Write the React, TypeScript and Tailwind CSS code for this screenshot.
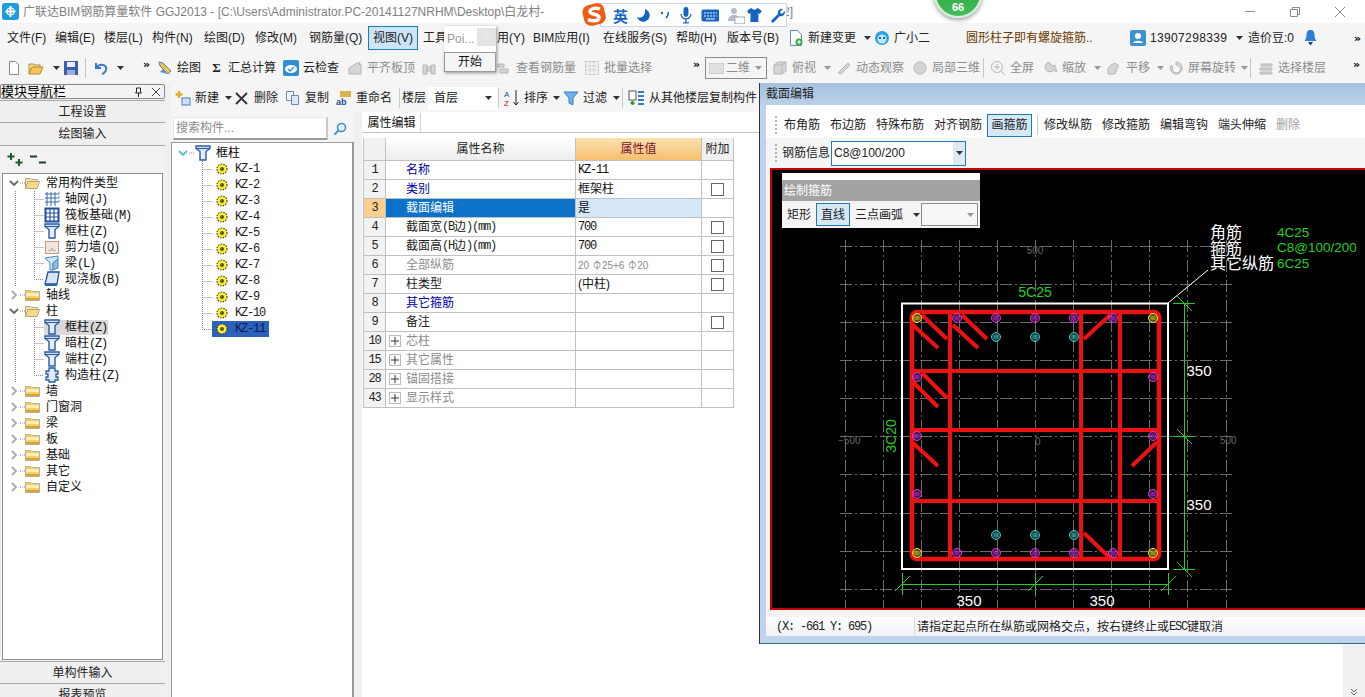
import React from "react";

const mono = "font-['Liberation_Mono','Noto_Sans_CJK_SC',monospace] text-[12px] tracking-[-1.2px]";

const Caret = ({ c = "#333" }: { c?: string }) => (
  <svg width="7" height="4" viewBox="0 0 7 4" className="shrink-0"><path d="M0 0h7L3.5 4z" fill={c} /></svg>
);
const More = () => (
  <span className="text-[11px] font-bold leading-none text-black -mt-2 font-['DejaVu_Sans',sans-serif]">»</span>
);
const Sep = ({ w }: { w: string }) => (
  <div className={`${w} shrink-0 flex h-full items-center`}><div className="h-[20px] w-px bg-[#c8c8c8]" /></div>
);

const I = ({ children, w = 16, h = 16 }: { children: React.ReactNode; w?: number; h?: number }) => (
  <svg width={w} height={h} viewBox={`0 0 ${w} ${h}`} className="shrink-0">{children}</svg>
);

const ColumnIcon = () => (
  <I>
    <path d="M1 1h14v2.500l-4 3V15H5V6.500L1 3.500z" fill="#e3edfb" stroke="#2a5aa8" strokeWidth="1.400" />
    <path d="M1.500 3.500h13" stroke="#2a5aa8" strokeWidth="1.200" />
  </I>
);
const GridIcon = () => (
  <I>
    <path d="M1 3h14M1 7h14M1 11h14M3 1v14M7 1v14M11 1v14" stroke="#3768b0" strokeWidth="1" />
    <path d="M14 2h2M14 6h2M14 10h2" stroke="#88a" strokeWidth="1" />
  </I>
);
const RaftIcon = () => (
  <I>
    <rect x="1.500" y="1.500" width="13" height="13" fill="#fff" stroke="#1f4f9e" strokeWidth="2" />
    <path d="M1 6h14M1 10h14M6 1v14M10 1v14" stroke="#1f4f9e" strokeWidth="1.200" />
  </I>
);
const WallIcon = () => (
  <I>
    <rect x="1.500" y="2.500" width="13" height="12" fill="#f3e6dc" stroke="#c79a86" />
    <path d="M4 12l1-1 2 1 1-3 2 3 2-1" stroke="#aaa" fill="none" />
  </I>
);
const BeamIcon = () => (
  <I>
    <path d="M1 3l13-2v3L9 8v7H6V8z" fill="#cfe4f6" stroke="#4a86c0" />
    <path d="M9 8l5-4v9l-5 2z" fill="#8dbde0" stroke="#4a86c0" />
  </I>
);
const SlabIcon = () => (
  <I>
    <path d="M4 1h11l-2 12H1z" fill="#d8e6f8" stroke="#1f4f9e" strokeWidth="1.300" />
    <path d="M1 13h12v2H1z" fill="#2d66b5" />
  </I>
);
const ConstrIcon = () => (
  <I>
    <path d="M5 1h6v3h3v3h-2v3h2v3h-3v2H5v-2H2v-3h2V7H2V4h3z" fill="#dfe9f7" stroke="#2a5aa8" strokeWidth="1.300" />
  </I>
);
const FolderClosed = () => (
  <I w={15} h={12}>
    <path d="M.5 2.500V1.500h5l1 1h8v9H.5z" fill="#f7cf6b" stroke="#b9b09a" />
    <rect x="1" y="4" width="13" height="3" fill="#fdeeb5" />
    <rect x="1" y="9" width="13" height="2" fill="#dd9f2f" />
  </I>
);
const FolderOpenI = () => (
  <I w={15} h={12}>
    <path d="M.5 11.500V1.500h5l1 1h6v2" fill="#f6e3ad" stroke="#b9a67a" />
    <path d="M.5 11.500l2.500-7h11.500l-2.500 7z" fill="#f8d98a" stroke="#b9a06a" />
  </I>
);
const Gear = () => (
  <svg width="12" height="12" viewBox="0 0 12 12" className="shrink-0">
    <circle cx="6" cy="6" r="5" fill="#ffee30" stroke="#333" strokeWidth="1.100" strokeDasharray="1.500 1.200" />
    <circle cx="6" cy="6" r="2" fill="#5c5a10" />
  </svg>
);
const Chevron = ({ open, c = "#999" }: { open?: boolean; c?: string }) => (
  <svg width="10" height="10" viewBox="0 0 10 10" className="shrink-0">
    <path d={open ? "M1 3l4 4 4-4" : "M3 1l4 4-4 4"} fill="none" stroke={c} strokeWidth="1.800" />
  </svg>
);

const Grey = ({ d }: { d: string }) => (
  <I><path d={d} fill="#d6d6d6" stroke="#b5b5b5" /></I>
);

const Tool = ({ w, icon, label, gray }: { w: string; icon?: React.ReactNode; label?: string; gray?: boolean }) => (
  <div className={`${w} shrink-0 flex items-center gap-1 whitespace-nowrap ${gray ? "text-[#8c8c8c]" : "text-[#222]"}`}>
    {icon}
    {label && <span>{label}</span>}
  </div>
);
const Box = ({ w, children }: { w: string; children?: React.ReactNode }) => (
  <div className={`${w} shrink-0 flex items-center whitespace-nowrap`}>{children}</div>
);

function TitleBar() {
  return (
    <div className="h-[23px] shrink-0 flex items-center bg-white pl-[2px] text-[12px] text-[#808080]">
      <svg width="17" height="17" viewBox="0 0 17 17" className="shrink-0">
        <rect width="17" height="17" rx="3" fill="#1f9be0" />
        <path d="M8.500 3v11M3.500 8.500h10" stroke="#fff" strokeWidth="2" />
        <circle cx="8.500" cy="8.500" r="3.500" fill="none" stroke="#fff" strokeWidth="1.200" />
      </svg>
      <span className="ml-[4px] whitespace-nowrap w-[555px] overflow-hidden">
        广联达BIM钢筋算量软件 GGJ2013 - [C:\Users\Administrator.PC-20141127NRHM\Desktop\白龙村-
      </span>
      <span className="ml-[205px] whitespace-nowrap">2]</span>
      <div className="ml-auto flex items-center pr-[20px] gap-[35px]">
        <div className="w-[10px] h-px bg-[#8a8a8a]" />
        <svg width="10" height="10" viewBox="0 0 10 10"><path d="M.5 2.500h7v7h-7zM2.500 2.500v-2h7v7h-2" fill="none" stroke="#8a8a8a" /></svg>
        <svg width="10" height="10" viewBox="0 0 10 10"><path d="M0 0l10 10M10 0L0 10" stroke="#8a8a8a" /></svg>
      </div>
    </div>
  );
}

function MenuBar() {
  return (
    <div className="h-[30px] shrink-0 flex items-center bg-[#f5f5f5] pl-[7px] text-[12px] text-[#222]">
      <Box w="w-[48px]">文件(F)</Box>
      <Box w="w-[49px]">编辑(E)</Box>
      <Box w="w-[48px]">楼层(L)</Box>
      <Box w="w-[52px]">构件(N)</Box>
      <Box w="w-[51px]">绘图(D)</Box>
      <Box w="w-[54px]">修改(M)</Box>
      <Box w="w-[59px]">钢筋量(Q)</Box>
      <div className="w-[50px] h-[24px] shrink-0 flex items-center justify-center bg-[#cce4f7] border border-[#1f7ab8] whitespace-nowrap">视图(V)</div>
      <div className="w-[5px] shrink-0" />
      <div className="w-[74px] shrink-0"><div className="w-[21px] overflow-hidden whitespace-nowrap">工具</div></div>
      <Box w="w-[36px]">用(Y)</Box>
      <Box w="w-[70px]">BIM应用(I)</Box>
      <Box w="w-[73px]">在线服务(S)</Box>
      <Box w="w-[51px]">帮助(H)</Box>
      <Box w="w-[61px]">版本号(B)</Box>
      <div className="w-[86px] shrink-0 flex items-center gap-[4px] whitespace-nowrap">
        <I>
          <path d="M2.500.5h7l4 4v11h-11z" fill="#fff" stroke="#5b8fc9" />
          <circle cx="11" cy="12" r="3.500" fill="#3fa83f" />
          <path d="M11 10v4M9 12h4" stroke="#fff" />
        </I>
        <span>新建变更</span>
        <span className="ml-[4px]"><Caret /></span>
      </div>
      <div className="w-[92px] shrink-0 flex items-center gap-[4px] whitespace-nowrap">
        <I>
          <circle cx="8" cy="8" r="7" fill="#2a9fe6" />
          <circle cx="8" cy="9" r="4.500" fill="#bfe8ff" />
          <circle cx="6" cy="8" r="1" fill="#134" />
          <circle cx="10" cy="8" r="1" fill="#134" />
        </I>
        <span>广小二</span>
      </div>
      <div className="w-[164px] shrink-0 whitespace-nowrap text-[#6b3800]">圆形柱子即有螺旋箍筋..</div>
      <div className="w-[118px] shrink-0 flex items-center gap-[4px] whitespace-nowrap">
        <svg width="16" height="16" viewBox="0 0 16 16" className="shrink-0">
          <rect width="16" height="16" rx="2" fill="#3b93cf" />
          <circle cx="8" cy="6" r="3" fill="#fff" />
          <path d="M3 13c1-3 9-3 10 0z" fill="#fff" />
        </svg>
        <span className="text-[#222] tracking-[0.35px]">13907298339</span>
        <span className="ml-[5px]"><Caret /></span>
      </div>
      <Box w="w-[56px]">造价豆:0</Box>
      <svg width="13" height="16" viewBox="0 0 13 16" className="shrink-0"><path d="M6.500 0c3 0 4 2 4 5 0 3 1 4 2 6H.5c1-2 2-3 2-6 0-3 1-5 4-5z" fill="#2f7fd6" /><path d="M4 12h5l-2.500 3.500z" fill="#143f7a" /></svg>
      <div className="ml-[37px]"><More /></div>
    </div>
  );
}

function MainToolbar() {
  return (
    <div className="h-[30px] shrink-0 flex items-center bg-[#f5f5f5] pl-[6px] text-[12px]">
      <Box w="w-[22px]"><I><path d="M3.500 1.500h6l3 3v10h-9z" fill="#fff" stroke="#8a8a8a" /></I></Box>
      <Box w="w-[25px]"><I><path d="M1 14V4h5l1 1h5v2" fill="#f5dc90" stroke="#b08a30" /><path d="M1 14l3-7h11l-3 7z" fill="#f4c552" stroke="#b08a30" /></I></Box>
      <Box w="w-[10px]"><Caret /></Box>
      <Box w="w-[22px]"><I><rect x="1" y="1" width="14" height="14" fill="#3a5fb0" /><rect x="4" y="2" width="8" height="5" fill="#e8eefb" /><rect x="4" y="10" width="8" height="5" fill="#9db0d8" /></I></Box>
      <Sep w="w-[8px]" />
      <Box w="w-[24px]"><I><path d="M3 3v5h5M3.500 8C5 4 11 3.500 13 7c1 3-1 6-4 7" fill="none" stroke="#3778cf" strokeWidth="2" /></I></Box>
      <Box w="w-[26px]"><Caret /></Box>
      <Box w="w-[14px]"><More /></Box>
      <Tool w="w-[54px]" label="绘图" icon={<I><path d="M2 2l4 1 8 8-3 3-8-8z" fill="#e8c650" stroke="#5b7fb5" /><path d="M3 12l3-3 4 5z" fill="#5b8fd0" /></I>} />
      <div className="w-[72px] shrink-0 flex items-center gap-[6px] whitespace-nowrap text-[#222]">
        <span className="w-[11px] text-[13px] font-bold text-center font-['Liberation_Serif',serif]">Σ</span>
        <span>汇总计算</span>
      </div>
      <Tool w="w-[64px]" label="云检查" icon={<I><rect width="16" height="16" rx="2" fill="#2f8fd4" /><ellipse cx="8" cy="9" rx="6" ry="4" fill="#fff" /><path d="M5 9l2 2 4-4" stroke="#2f8fd4" strokeWidth="1.300" fill="none" /></I>} />
      <Tool w="w-[74px]" gray label="平齐板顶" icon={<Grey d="M2 14V8l8-5 2 2v-3l2 3v9z" />} />
      <Tool w="w-[75px]" gray icon={<Grey d="M2 5h4v9H2zM10 5h4v9h-4zM6 7h4v4H6z" />} />
      <Tool w="w-[88px]" gray label="查看钢筋量" icon={<Grey d="M2 4h6v3H2zM4 9h8v4H4z" />} />
      <Tool w="w-[109px]" gray label="批量选择" icon={<I><path d="M1.500 1.500h13v13h-13zM1.500 6h13M1.500 10h13M6 1.500v13M10 1.500v13" fill="none" stroke="#c0c0c0" strokeDasharray="2 1" /></I>} />
      <Box w="w-[12px]"><More /></Box>
      <div className="w-[62px] h-[22px] shrink-0 flex items-center border border-[#8a8a8a] pl-[3px] pr-[4px] text-[#8c8c8c]">
        <div className="w-[15px] h-[11px] bg-[#e0e0e0] border border-[#cfcfcf]" />
        <span className="ml-[2px] whitespace-nowrap">二维</span>
        <span className="ml-auto"><Caret c="#999" /></span>
      </div>
      <div className="w-[5px] shrink-0" />
      <Tool w="w-[52px]" gray label="俯视" icon={<Grey d="M2 5l4-3h8v9l-4 3H2zM2 5h8v9M10 5l4-3" />} />
      <Box w="w-[12px]"><Caret c="#999" /></Box>
      <Tool w="w-[76px]" gray label="动态观察" icon={<Grey d="M2 13L12 3l2 2L5 14z" />} />
      <Tool w="w-[71px]" gray label="局部三维" icon={<Grey d="M8 2a6 6 0 100 12A6 6 0 008 2z" />} />
      <Sep w="w-[7px]" />
      <Tool w="w-[52px]" gray label="全屏" icon={<I><circle cx="7" cy="7" r="5.500" fill="#f4f4f4" stroke="#b5b5b5" /><path d="M7 4v6M4 7h6M11 11l4 4" stroke="#b5b5b5" /></I>} />
      <Tool w="w-[52px]" gray label="缩放" icon={<Grey d="M7 2a5 5 0 105 8l2 2 1-1-2-3V5l-3 1z" />} />
      <Box w="w-[12px]"><Caret c="#999" /></Box>
      <Tool w="w-[51px]" gray label="平移" icon={<Grey d="M2 14V8l3-3 4-2 3 2v2l-2 4-1 3z" />} />
      <Box w="w-[11px]"><Caret c="#999" /></Box>
      <Tool w="w-[73px]" gray label="屏幕旋转" icon={<Grey d="M8 2a6 6 0 11-5 3l2 2a4 4 0 103-2z" />} />
      <Box w="w-[9px]"><Caret c="#999" /></Box>
      <Sep w="w-[8px]" />
      <Tool w="w-[95px]" gray label="选择楼层" icon={<Grey d="M3 4h11v2H3zM2 8h12v2H2zM2 12h12v2H2z" />} />
      <More />
    </div>
  );
}

type Row = { kind: "folder" | "child"; open?: boolean; cn: string; lat?: string; icon?: React.ReactNode; sel?: boolean; last?: boolean; outer?: boolean };

const navRows: Row[] = [
  { kind: "folder", open: true, cn: "常用构件类型" },
  { kind: "child", cn: "轴网", lat: "(J)", icon: <GridIcon />, outer: true },
  { kind: "child", cn: "筏板基础", lat: "(M)", icon: <RaftIcon />, outer: true },
  { kind: "child", cn: "框柱", lat: "(Z)", icon: <ColumnIcon />, outer: true },
  { kind: "child", cn: "剪力墙", lat: "(Q)", icon: <WallIcon />, outer: true },
  { kind: "child", cn: "梁", lat: "(L)", icon: <BeamIcon />, outer: true },
  { kind: "child", cn: "现浇板", lat: "(B)", icon: <SlabIcon />, outer: true, last: true },
  { kind: "folder", cn: "轴线" },
  { kind: "folder", open: true, cn: "柱" },
  { kind: "child", cn: "框柱", lat: "(Z)", icon: <ColumnIcon />, sel: true, outer: true },
  { kind: "child", cn: "暗柱", lat: "(Z)", icon: <ColumnIcon />, outer: true },
  { kind: "child", cn: "端柱", lat: "(Z)", icon: <ColumnIcon />, outer: true },
  { kind: "child", cn: "构造柱", lat: "(Z)", icon: <ConstrIcon />, outer: true, last: true },
  { kind: "folder", cn: "墙" },
  { kind: "folder", cn: "门窗洞" },
  { kind: "folder", cn: "梁" },
  { kind: "folder", cn: "板" },
  { kind: "folder", cn: "基础" },
  { kind: "folder", cn: "其它" },
  { kind: "folder", cn: "自定义" },
];

const FolderWrap = ({ open }: { open?: boolean }) => (open ? <FolderOpenI /> : <FolderClosed />);

function NavRow({ r }: { r: Row }) {
  if (r.kind === "folder") {
    return (
      <div className="h-[16px] flex items-center pl-[6px]">
        <Chevron open={r.open} c={r.open ? "#666" : "#aaa"} />
        <svg width="6" height="2" className="shrink-0"><path d="M1 1h5" stroke="#888" strokeDasharray="1 1" /></svg>
        <FolderWrap open={r.open} />
        <span className="ml-[6px] whitespace-nowrap">{r.cn}</span>
      </div>
    );
  }
  return (
    <div className="h-[16px] flex items-center">
      <svg width="41" height="16" className="shrink-0">
        <path d="M12.500 0v16" stroke="#888" strokeDasharray="1 1" />
        <path d={r.last ? "M31.500 0v8.500H41" : "M31.500 0v16M31.500 8.500H41"} stroke="#888" strokeDasharray="1 1" fill="none" />
      </svg>
      <div className={`flex h-[15px] items-center pr-[1px] ${r.sel ? "bg-[#d9d9d9]" : ""}`}>
        {r.icon}
        <span className="ml-[5px] whitespace-nowrap">{r.cn}<span className={mono}>{r.lat}</span></span>
      </div>
    </div>
  );
}

function NavPanel() {
  const btn = "shrink-0 flex items-center justify-center bg-[#efefef] border-b border-[#a8a8a8] text-[#222]";
  return (
    <div className="w-[165px] shrink-0 h-full flex flex-col text-[12px] bg-[#f0f0f0]">
      <div className="mt-px h-[15px] shrink-0 flex items-center border border-[#8a8a8a] rounded-[2px] bg-[#f3f3f3] text-black text-[13px] leading-none">
        <span className="whitespace-nowrap">模块导航栏</span>
        <svg width="9" height="10" viewBox="0 0 9 10" className="ml-[68px]"><path d="M2.500 1h4v4l1 1h-6l1-1zM4.500 6v4" fill="none" stroke="#222" /></svg>
        <svg width="8" height="8" viewBox="0 0 8 8" className="ml-[9px]"><path d="M0 0l8 8M8 0L0 8" stroke="#444" /></svg>
      </div>
      <div className={`${btn} mt-[1px] h-[23px] border-t`}>工程设置</div>
      <div className={`${btn} h-[23px]`}>绘图输入</div>
      <div className="h-[27px] shrink-0 flex items-center pl-[7px] gap-[6px] bg-[#f2f2f2]">
        <svg width="17" height="15" viewBox="0 0 17 15"><path d="M4 1v7M.5 4.500h7M12 7v7M8.500 10.500h7" stroke="#1f5a2c" strokeWidth="2" /></svg>
        <svg width="17" height="15" viewBox="0 0 17 15"><path d="M0 4.500h7M9 10.500h7" stroke="#1f3a3a" strokeWidth="2" /></svg>
      </div>
      <div className="mx-[2px] h-[487px] shrink-0 border border-[#8f8f8f] bg-white pt-[1px] text-[#111] overflow-hidden">
        {navRows.map((r, i) => <NavRow key={i} r={r} />)}
      </div>
      <div className={`${btn} mt-px h-[23px] border-t`}>单构件输入</div>
      <div className={`${btn} h-[23px]`}>报表预览</div>
    </div>
  );
}

function ComponentToolbar() {
  const tool = "shrink-0 flex items-center gap-[4px] whitespace-nowrap";
  return (
    <div className="mt-px h-[28px] shrink-0 flex items-center bg-[#f5f5f5] pl-[3px] text-[12px] text-[#222]">
      <div className={`${tool} w-[61px]`}>
        <I w={17}><path d="M5 1v7M1.500 4.500h7" stroke="#e0b020" strokeWidth="2.400" /><rect x="8" y="8" width="8" height="7" fill="#cfe0f5" stroke="#4a7fc0" /></I>
        <span>新建</span>
        <span className="ml-[2px]"><Caret /></span>
      </div>
      <div className={`${tool} w-[50px] gap-[6px]`}>
        <svg width="13" height="13" viewBox="0 0 13 13" className="shrink-0"><path d="M1 1l11 11M12 1L1 12" stroke="#333" strokeWidth="1.800" /></svg>
        <span>删除</span>
      </div>
      <div className={`${tool} w-[51px]`}>
        <I><path d="M1.500 1.500h7v9h-7z" fill="#f6f6f6" stroke="#6a8ab5" /><path d="M6.500 5.500h7v9h-7z" fill="#dbe7f6" stroke="#6a8ab5" /></I>
        <span>复制</span>
      </div>
      <div className={`${tool} w-[63px]`}>
        <I><path d="M4 1l11 0v6L4 7z" fill="#d6b84a" /><text x="0" y="15" fontSize="9" fontWeight="700" fill="#1d4f91" className="font-['Liberation_Sans']">ab</text></I>
        <span>重命名</span>
      </div>
      <Sep w="w-[3px]" />
      <div className="w-[26px] shrink-0 whitespace-nowrap">楼层</div>
      <div className="w-[70px] h-[23px] shrink-0 flex items-center bg-white pl-[6px] pr-[6px] whitespace-nowrap">
        <span>首层</span><span className="ml-auto"><Caret /></span>
      </div>
      <Sep w="w-[6px]" />
      <div className={`${tool} w-[60px]`}>
        <svg width="16" height="18" viewBox="0 0 16 18" className="shrink-0">
          <text x="0" y="8" fontSize="8" fill="#1d4f91" className="font-['Liberation_Sans']">A</text>
          <text x="0" y="17" fontSize="8" fill="#b02222" className="font-['Liberation_Sans']">Z</text>
          <path d="M12 1v15M9.500 13l2.500 3 2.500-3" fill="none" stroke="#222" />
        </svg>
        <span>排序</span>
        <span className="ml-[1px]"><Caret /></span>
      </div>
      <div className={`${tool} w-[58px] gap-[5px]`}>
        <svg width="14" height="14" viewBox="0 0 14 14" className="shrink-0"><path d="M0 1h14L9 7v7l-4-2V7z" fill="#6fb0e8" stroke="#2f7fc9" /></svg>
        <span>过滤</span>
        <span className="ml-[1px]"><Caret /></span>
      </div>
      <Sep w="w-[6px]" />
      <div className={`${tool} gap-[3px]`}>
        <I w={17}><rect x="1" y="1" width="7" height="9" fill="#fff" stroke="#555" /><path d="M4.500 11v4M2.500 13h4" stroke="#2a9a3a" strokeWidth="2" /><path d="M10 2h6M10 6h6M10 10h6M10 14h6" stroke="#3a7ab8" strokeWidth="2" /></I>
        <span>从其他楼层复制构件</span>
      </div>
    </div>
  );
}

function ListPanel() {
  return (
    <div className="w-[183px] shrink-0 flex flex-col text-[12px]">
      <div className="h-[30px] shrink-0 flex items-end bg-[#f5f5f5] pb-[2px] pl-[2px]">
        <div className="w-[155px] h-[23px] bg-white border-t border-l border-[#e8e8e8] border-b-2 border-r-2 border-b-[#9a9a9a] border-r-[#c8c8c8] flex items-center pl-[2px] text-[#8a8a8a]">搜索构件...</div>
        <div className="w-[24px] h-[23px] flex items-center justify-center">
          <svg width="14" height="14" viewBox="0 0 14 14"><circle cx="8.500" cy="5.500" r="4" fill="#eaf4fc" stroke="#3f93c9" strokeWidth="1.600" /><path d="M5.500 8.500L1.500 12.500" stroke="#3f93c9" strokeWidth="2" /></svg>
        </div>
      </div>
      <div className="flex-1 border-t border-l border-r-2 border-[#9a9a9a] bg-white pt-[2px]">
        <div className="h-[16px] flex items-center pl-[6px]">
          <Chevron open c="#4fc3d0" />
          <svg width="7" height="2" className="shrink-0"><path d="M1 1h6" stroke="#888" strokeDasharray="1 1" /></svg>
          <ColumnIcon />
          <span className="ml-[5px]">框柱</span>
        </div>
        {Array.from({ length: 11 }).map((_, i) => (
          <div key={i} className="h-[16px] flex items-center">
            <svg width="40" height="16" className="shrink-0">
              <path d={i === 10 ? "M30.500 0v8.500H40" : "M30.500 0v16M30.500 8.500H40"} stroke="#888" strokeDasharray="1 1" fill="none" />
            </svg>
            <div className={`flex items-center h-[16px] w-[57px] pl-[4px] ${i === 10 ? "bg-[#2b62bb] text-[#0a1c50]" : "text-[#222]"}`}>
              <Gear />
              <span className={`ml-[7px] ${mono}`}>KZ-{i + 1}</span>
            </div>
          </div>
        ))}
      </div>
    </div>
  );
}

const Chk = () => <div className="w-[13px] h-[13px] border border-[#666] bg-white" />;

type PRow = { n: string; name: React.ReactNode; c?: string; val?: React.ReactNode; chk?: boolean; plus?: boolean; sel?: boolean };
const pRows: PRow[] = [
  { n: "1", name: "名称", c: "text-[#0000a8]", val: <span className={mono}>KZ-11</span> },
  { n: "2", name: "类别", c: "text-[#0000a8]", val: "框架柱", chk: true },
  { n: "3", name: "截面编辑", c: "text-white", val: "是", sel: true },
  { n: "4", name: <>截面宽<span className={mono}>(B</span>边<span className={mono}>)(mm)</span></>, c: "text-[#222]", val: <span className={mono}>700</span>, chk: true },
  { n: "5", name: <>截面高<span className={mono}>(H</span>边<span className={mono}>)(mm)</span></>, c: "text-[#222]", val: <span className={mono}>700</span>, chk: true },
  { n: "6", name: "全部纵筋", c: "text-[#8c8c8c]", val: <span className="text-[#8c8c8c] text-[10px] font-['Liberation_Sans','Noto_Sans_CJK_SC',sans-serif]">20 <b className="text-[#333]">⏀</b>25+6 <b className="text-[#333]">⏀</b>20</span>, chk: true },
  { n: "7", name: "柱类型", c: "text-[#222]", val: "(中柱)", chk: true },
  { n: "8", name: "其它箍筋", c: "text-[#0000a8]" },
  { n: "9", name: "备注", c: "text-[#222]", chk: true },
  { n: "10", name: "芯柱", c: "text-[#8c8c8c]", plus: true },
  { n: "15", name: "其它属性", c: "text-[#8c8c8c]", plus: true },
  { n: "28", name: "锚固搭接", c: "text-[#8c8c8c]", plus: true },
  { n: "43", name: "显示样式", c: "text-[#8c8c8c]", plus: true },
];

function PropPanel() {
  const line = "border-b border-r border-[#c0c0c0]";
  return (
    <div className="relative flex-1 bg-white text-[12px] min-w-0">
      <div className="h-[20px] mt-px flex items-stretch border-b border-[#c4c4c4]">
        <div className="ml-[1px] w-[58px] flex items-center justify-center bg-white border-r border-[#d0d0d0] text-[#111]">属性编辑</div>
      </div>
      <div className="ml-[1px] mt-[5px] w-[370px] grid grid-cols-[22px_190px_126px_32px] grid-rows-[23px] auto-rows-[19px] border-l border-[#c0c0c0]">
        <div className={`${line} bg-[#f1f1f1]`} />
        <div className={`${line} flex items-center justify-center bg-gradient-to-b from-white to-[#ececec] text-[#222]`}>属性名称</div>
        <div className={`${line} flex items-center justify-center bg-gradient-to-b from-[#fbe2ae] to-[#f5bf6e] text-[#7a1230]`}>属性值</div>
        <div className={`${line} flex items-center justify-center bg-[#f1f1f1] text-[#222]`}>附加</div>
        {pRows.map((r) => (
          <React.Fragment key={r.n}>
            <div className={`${line} flex items-center justify-center ${mono} ${r.sel ? "bg-[#fbcf8e]" : "bg-[#f3f3f3]"} text-[#222]`}>{r.n}</div>
            <div className={`${line} flex items-center pl-[20px] relative whitespace-nowrap ${r.sel ? "bg-[#0a72c8]" : ""} ${r.c}`}>
              {r.plus && (
                <div className="absolute left-[3px] top-[3px] w-[12px] h-[12px] border border-[#bbb] flex items-center justify-center">
                  <svg width="8" height="8" viewBox="0 0 8 8"><path d="M4 0v8M0 4h8" stroke="#333" /></svg>
                </div>
              )}
              {r.name}
            </div>
            <div className={`${line} flex items-center pl-[2px] whitespace-nowrap text-[#111] ${r.sel ? "bg-[#d5e7f7]" : ""}`}>{r.val}</div>
            <div className={`${line} flex items-center justify-center`}>{r.chk && <Chk />}</div>
          </React.Fragment>
        ))}
      </div>
      <div className="absolute right-0 bottom-0 w-[22px] h-[54px] bg-[#f0f0f0] flex items-end justify-center pb-[2px]">
        <svg width="8" height="8" viewBox="0 0 8 8"><path d="M1 2l3 3 3-3M1 5l3 3 3-3" fill="none" stroke="#666" /></svg>
      </div>
    </div>
  );
}

function Canvas() {
  const vs = [845, 883, 921, 959, 997, 1035, 1073, 1111, 1149, 1187, 1226];
  const hs = [246, 284, 322, 360, 398, 436, 474, 513, 551, 589];
  const hooks = [
    [922, 315, 947, 339], [913, 325, 938, 348], [962, 315, 987, 339], [953, 325, 978, 348],
    [922, 373, 947, 398], [913, 382, 938, 407], [913, 443, 938, 466], [1157, 442, 1132, 466],
    [1110, 315, 1084, 339], [1084, 533, 1110, 558],
  ];
  const purple = [
    ...[957, 996, 1035, 1074, 1113].flatMap((x) => [[x, 318], [x, 553]]),
    ...[377, 436, 494].flatMap((y) => [[917, y], [1153, y]]),
  ];
  const cyan = [996, 1035, 1074].flatMap((x) => [[x, 337], [x, 535]]);
  const yellow = [[917, 318], [1153, 318], [917, 553], [1153, 553]];
  const dot = (p: number[], c: string, i: number) => (
    <g key={`${c}${i}`}>
      <circle cx={p[0]} cy={p[1]} r="4.500" fill={c} fillOpacity="0.35" stroke={c} />
      <path d={`M${p[0] - 2.500} ${p[1] - 1}h5M${p[0] - 2.500} ${p[1] + 1}h5`} stroke={c} strokeWidth="0.800" />
    </g>
  );
  const sans = "font-['Liberation_Sans',sans-serif]";
  const cad = "font-['Noto_Sans_CJK_SC',sans-serif]";
  return (
    <svg width="593" height="438" viewBox="772 170 593 438" className="block bg-black">
      {vs.map((x) => <path key={x} d={`M${x + 0.5} 240V608`} stroke="#6b6b6b" strokeDasharray="12 3 2 3" />)}
      {hs.map((y) => <path key={y} d={`M840 ${y + 0.5}H1232`} stroke="#6b6b6b" strokeDasharray="12 3 2 3" />)}
      <text x="1035" y="254" textAnchor="middle" fontSize="10" fill="#666" className={sans}>500</text>
      <text x="838" y="444" fontSize="10" fill="#666" className={sans}>−500</text>
      <text x="1220" y="444" fontSize="10" fill="#666" className={sans}>500</text>
      <text x="1035" y="445" fontSize="10" fill="#666" className={sans}>0</text>

      <rect x="902" y="303.500" width="266" height="265.500" fill="none" stroke="#fff" strokeWidth="2" />
      <path d="M1168 303l40-33" stroke="#fff" />

      <g stroke="#22d022" strokeWidth="1" fill="none">
        <path d="M1184.500 303v266M1173 303.500h22M1173 436.500h22M1173 569.500h22M1177 296l15 15M1177 429l15 15M1177 562l15 15" />
        <path d="M902 584.500h266M902.500 573v22M1035.500 573v22M1168.500 573v22M895 591l15-15M1028 591l15-15M1161 591l15-15" />
      </g>

      <g stroke="#ee1111" fill="none" strokeWidth="4">
        <rect x="912" y="312" width="247" height="247" rx="5" strokeWidth="4.500" />
        <path d="M950 313v245M1081 313v245M1120 313v245M913 371h245M913 430h245M913 501h245" />
        {hooks.map((h, i) => <path key={i} d={`M${h[0]} ${h[1]}L${h[2]} ${h[3]}`} />)}
      </g>
      {purple.map((p, i) => dot(p, "#d03ad8", i))}
      {cyan.map((p, i) => dot(p, "#3ec8c8", i))}
      {yellow.map((p, i) => dot(p, "#f2e23a", i))}

      <text x="1210" y="238" fontSize="16" fill="#fff" className={cad}>角筋</text>
      <text x="1210" y="254" fontSize="16" fill="#fff" className={cad}>箍筋</text>
      <text x="1210" y="269" fontSize="16" fill="#fff" className={cad}>其它纵筋</text>
      <text x="1277" y="237" fontSize="13.500" fill="#22d022" className={sans}>4C25</text>
      <text x="1277" y="252" fontSize="13.500" fill="#22d022" className={sans}>C8@100/200</text>
      <text x="1277" y="268" fontSize="13.500" fill="#22d022" className={sans}>6C25</text>
      <text x="1035" y="297" textAnchor="middle" fontSize="14" fill="#22d022" className={sans}>5C25</text>
      <text x="0" y="0" transform="translate(896 436) rotate(-90)" textAnchor="middle" fontSize="14" fill="#22d022" className={sans}>3C20</text>
      <text x="1199" y="376" textAnchor="middle" fontSize="15" fill="#fff" className={sans}>350</text>
      <text x="1199" y="510" textAnchor="middle" fontSize="15" fill="#fff" className={sans}>350</text>
      <text x="969" y="606" textAnchor="middle" fontSize="15" fill="#fff" className={sans}>350</text>
      <text x="1102" y="606" textAnchor="middle" fontSize="15" fill="#fff" className={sans}>350</text>
    </svg>
  );
}

const Grip = () => (
  <svg width="2" height="18" className="shrink-0"><path d="M1 0v18" stroke="#999" strokeDasharray="2 2" strokeWidth="1.500" /></svg>
);

function SectionDialog() {
  const items = "shrink-0 whitespace-nowrap";
  return (
    <div className="absolute left-[759px] top-[83px] w-[606px] h-[561px] flex flex-col border-l border-[#333] border-b border-b-[#2f6f85] bg-[#bfd4ea] text-[12px] text-[#222]">
      <div className="h-[22px] shrink-0 flex items-center pl-[6px] bg-gradient-to-b from-[#a6c1df] to-[#bbd1e8]">截面编辑</div>
      <div className="ml-[6px] flex-1 flex flex-col bg-[#f5f5f5] min-h-0">
        <div className="h-[33px] shrink-0 flex items-center pt-[7px] pl-[9px] bg-white">
          <Grip />
          <Box w="w-[7px]" />
          <Box w="w-[46px]">布角筋</Box>
          <Box w="w-[46px]">布边筋</Box>
          <Box w="w-[58px]">特殊布筋</Box>
          <Box w="w-[53px]">对齐钢筋</Box>
          <div className={`${items} w-[45px] h-[23px] flex items-center justify-center bg-[#d5e8f8] border border-[#1f7ab8]`}>画箍筋</div>
          <div className="w-[5px] shrink-0" />
          <div className="h-[20px] w-px bg-[#c8c8c8] shrink-0" />
          <Box w="w-[6px]" />
          <Box w="w-[58px]">修改纵筋</Box>
          <Box w="w-[58px]">修改箍筋</Box>
          <Box w="w-[58px]">编辑弯钩</Box>
          <Box w="w-[58px]">端头伸缩</Box>
          <div className={`${items} text-[#a0a0a0]`}>删除</div>
        </div>
        <div className="h-[30px] shrink-0 flex items-center pl-[9px]">
          <Grip />
          <div className={`${items} ml-[5px] w-[49px]`}>钢筋信息</div>
          <div className="w-[135px] h-[25px] shrink-0 flex items-center justify-between border border-[#1f7ab8] bg-white pl-[2px]">
            <span className="font-['Liberation_Sans',sans-serif]">C8@100/200</span>
            <div className="w-[12px] h-full flex items-center justify-center bg-[#dfe9f3]"><Caret /></div>
          </div>
        </div>
        <div className="relative ml-[4px] h-[442px] shrink-0 border-2 border-r-0 border-[#c40000] bg-black">
          <Canvas />
          <div className="absolute left-[10px] top-[3px] w-[198px] h-[55px] flex flex-col bg-white">
            <div className="h-[7px] shrink-0" />
            <div className="h-[21px] shrink-0 flex items-center pl-[2px] bg-[#a3a3a3] text-white">绘制箍筋</div>
            <div className="flex-1 flex items-center bg-[#f5f5f5] pl-[5px]">
              <Box w="w-[29px]">矩形</Box>
              <div className="w-[34px] h-[23px] shrink-0 flex items-center justify-center bg-[#d5e8f8] border border-[#1f7ab8]">直线</div>
              <Box w="w-[5px]" />
              <Box w="w-[58px]">三点画弧</Box>
              <Box w="w-[8px]"><Caret /></Box>
              <div className="w-[57px] h-[23px] shrink-0 flex items-center justify-end border border-[#8a8a8a] bg-[#f7f7f7] pr-[3px]"><Caret c="#999" /></div>
            </div>
          </div>
        </div>
        <div className="h-[7px] shrink-0 bg-[#f4f4f4]" />
        <div className="h-[19px] shrink-0 flex items-stretch bg-gradient-to-b from-white to-[#eef2f6]">
          <div className={`w-[146px] ml-[3px] flex items-center pl-[7px] border-r border-[#d8d8d8] ${mono}`}>(X: -661 Y: 695)</div>
          <div className="flex items-center pl-[2px] whitespace-nowrap">请指定起点所在纵筋或网格交点，按右键终止或<span className={mono}>ESC</span>键取消</div>
        </div>
        <div className="h-[7px] shrink-0 bg-[#bfd4ea] -ml-[6px]" />
      </div>
    </div>
  );
}

function Overlays() {
  return (
    <>
      <div className="absolute left-[934px] -top-[30px] w-[48px] h-[48px] rounded-full bg-gradient-to-b from-[#1f9d3d] to-[#43bd5a] border-2 border-[#d6efd9] shadow-[0_2px_5px_rgba(0,0,0,0.4)] flex items-end justify-center pb-[3px]">
        <span className="text-[11px] font-bold text-white leading-none font-['Liberation_Sans',sans-serif]">66</span>
      </div>

      <div className="absolute left-[600px] top-[3px] w-[187px] h-[24px] bg-white border border-[#c8d8ea] flex items-center pl-[12px] gap-[9px]">
        <span className="text-[15px] font-bold text-[#1565c0] leading-none font-['Noto_Sans_CJK_SC',sans-serif]">英</span>
        <svg width="13" height="13" viewBox="0 0 13 13"><path d="M8 0a6.500 6.500 0 11-8 8c3 2 9 0 8-8z" fill="#1565c0" /></svg>
        <svg width="10" height="10" viewBox="0 0 10 10" className="ml-[1px]"><circle cx="2" cy="3" r="1.200" fill="#1565c0" /><path d="M8 2c1 2 0 4-2 6" stroke="#1565c0" strokeWidth="1.600" fill="none" /></svg>
        <svg width="12" height="17" viewBox="0 0 12 17" className="ml-[1px]"><rect x="3.500" width="5" height="10" rx="2.500" fill="#1565c0" /><path d="M1 7a5 5 0 0010 0M6 12v4M3 16h6" stroke="#1565c0" strokeWidth="1.300" fill="none" /></svg>
        <svg width="19" height="13" viewBox="0 0 19 13"><rect x=".5" y=".5" width="18" height="12" rx="2" fill="#1565c0" /><path d="M3 4h13M3 7h13" stroke="#fff" strokeDasharray="2 1" /><path d="M5 10h9" stroke="#fff" /></svg>
        <svg width="17" height="17" viewBox="0 0 17 17"><circle cx="6" cy="4" r="3" fill="#b5bcc4" /><path d="M0 14c0-8 12-8 12 0z" fill="#b5bcc4" /><rect x="7" y="10" width="10" height="7" fill="#fff" stroke="#9aa" /></svg>
        <svg width="15" height="14" viewBox="0 0 15 14" className="-ml-[7px]"><path d="M4 0l3.500 2L11 0l4 3-2 3-1.500-1v9h-8V5L2 6 0 3z" fill="#1565c0" /></svg>
        <svg width="15" height="15" viewBox="0 0 15 15"><path d="M14 3l-3 3-2-2 3-3a4 4 0 00-5 5L0 13l2 2 7-7a4 4 0 005-5z" fill="#1565c0" /></svg>
      </div>
      <svg width="28" height="27" viewBox="0 0 28 27" className="absolute left-[580px] top-[1px]">
        <rect x="3" y="3" width="22" height="21" rx="7" fill="#ef5a14" transform="rotate(-14 14 13)" />
        <path d="M20 8c-3-1.500-10-1-10 2.500s9 2 9 6-7 4-11 2" fill="none" stroke="#fff" strokeWidth="3.500" />
      </svg>

      <div className="absolute left-[444px] top-[26px] w-[52px] h-[46px] bg-white shadow-[1px_1px_3px_rgba(0,0,0,0.4)] text-[12px] flex flex-col">
        <div className="h-[26px] shrink-0 flex items-start pt-[2px] pl-[3px]">
          <span className="mt-[2px] text-[#9a9a9a] font-['Liberation_Sans',sans-serif]">Poi...</span>
          <div className="ml-auto w-[19px] h-[18px] bg-[#e4e4e4] flex items-center justify-center">
            <svg width="6" height="6" viewBox="0 0 6 6"><path d="M0 0l6 6M6 0L0 6" stroke="#eee" /></svg>
          </div>
        </div>
        <div className="h-[20px] shrink-0 flex items-center justify-center bg-[#f5f5f5] border border-[#9a9a9a] text-[#111]">开始</div>
      </div>
    </>
  );
}

export default function App() {
  return (
    <div className="relative w-[1365px] h-[697px] overflow-hidden bg-white flex flex-col font-['Liberation_Sans','Noto_Sans_CJK_SC',sans-serif] text-[12px]">
      <TitleBar />
      <MenuBar />
      <MainToolbar />
      <div className="flex-1 flex min-h-0">
        <NavPanel />
        <div className="flex-1 flex flex-col min-w-0 bg-[#f0f0f0] pl-[6px]">
          <ComponentToolbar />
          <div className="flex-1 flex min-h-0">
            <ListPanel />
            <div className="w-[8px] shrink-0 bg-[#f0f0f0]" />
            <PropPanel />
          </div>
        </div>
      </div>
      <SectionDialog />
      <Overlays />
    </div>
  );
}
